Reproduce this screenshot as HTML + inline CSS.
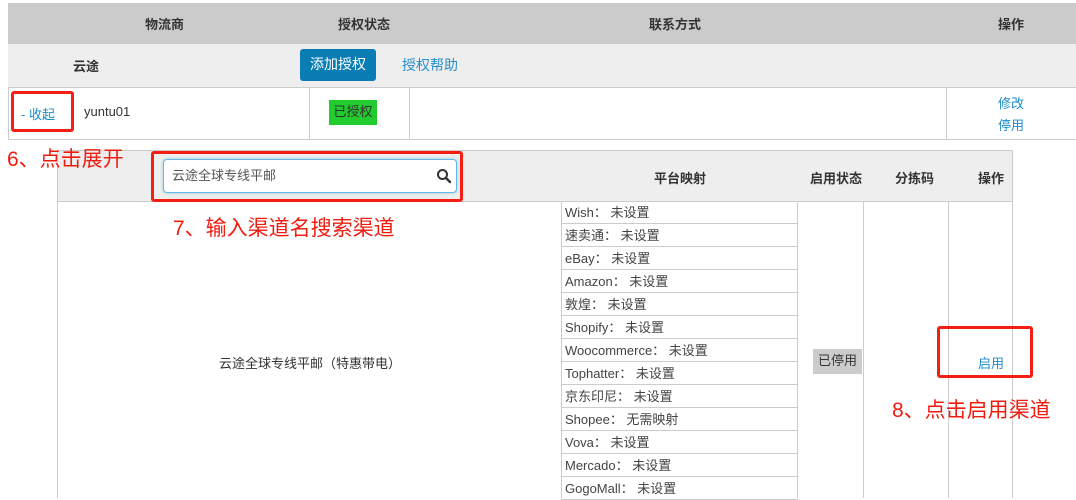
<!DOCTYPE html>
<html><head><meta charset="utf-8"><style>
*{box-sizing:border-box;margin:0;padding:0}
body{width:1076px;height:498px;overflow:hidden;background:#fff;font-family:"Liberation Sans","Noto Sans CJK SC",sans-serif;font-size:13px;color:#333;position:relative}
.a{position:absolute}
.c{text-align:center}
.b{font-weight:bold}
.blue{color:#1a8ccc}
.red{color:#f01c10;font-size:21px;z-index:5}
.rb{position:absolute;border:3px solid #f41e14;border-radius:3px;z-index:5}
.row{position:absolute;left:561px;width:237px;height:23px;border-bottom:1px solid #ccc;padding-left:4px;line-height:23px;color:#444}
</style></head><body>
<!-- top table -->
<div class="a" style="left:8px;top:3px;width:1068px;height:41px;background:#cbcbcb"></div>
<div class="a b" style="left:145px;top:14px">物流商</div>
<div class="a b" style="left:338px;top:14px">授权状态</div>
<div class="a b" style="left:649px;top:14px">联系方式</div>
<div class="a b" style="left:998px;top:14px">操作</div>
<div class="a" style="left:8px;top:44px;width:1068px;height:44px;background:#eee;border-bottom:1px solid #ccc"></div>
<div class="a b" style="left:73px;top:56px">云途</div>
<div class="a c" style="left:300px;top:49px;width:76px;height:32px;background:#0a7db4;border-radius:3px;color:#fff;line-height:31px;font-size:14px">添加授权</div>
<div class="a blue" style="left:402px;top:55px;font-size:14px;color:#2a8fcb">授权帮助</div>
<div class="a" style="left:8px;top:88px;width:1068px;height:52px;border-left:1px solid #ccc;border-bottom:1px solid #ccc"></div>
<div class="a" style="left:309px;top:88px;width:1px;height:51px;background:#ccc"></div>
<div class="a" style="left:409px;top:88px;width:1px;height:51px;background:#ccc"></div>
<div class="a" style="left:946px;top:88px;width:1px;height:51px;background:#ccc"></div>
<div class="a blue" style="left:21px;top:104px">- 收起</div>
<div class="a" style="left:84px;top:104px">yuntu01</div>
<div class="a c" style="left:329px;top:100px;width:48px;height:25px;background:#22cc2e;line-height:24px">已授权</div>
<div class="a blue" style="left:998px;top:93px">修改</div>
<div class="a blue" style="left:998px;top:115px">停用</div>
<div class="rb" style="left:11px;top:91px;width:63px;height:41px"></div>

<!-- inner table -->
<div class="a" style="left:57px;top:150px;width:956px;height:52px;background:#eee;border:1px solid #ccc;border-bottom:1px solid #ccc"></div>
<div class="a" style="left:57px;top:201px;width:956px;height:297px;border-left:1px solid #ccc;border-right:1px solid #ccc"></div>
<div class="a red" style="left:7px;top:143px">6、点击展开</div>
<div class="a" style="left:163px;top:159px;width:294px;height:34px;border:1px solid #66b8e8;border-radius:4px;background:#fff;box-shadow:0 0 3px #9cd;padding-left:8px;line-height:32px;color:#555">云途全球专线平邮</div>
<svg class="a" style="left:436px;top:168px" width="16" height="16" viewBox="0 0 16 16"><circle cx="6.5" cy="6.5" r="4.5" stroke="#333" stroke-width="2" fill="none"/><path d="M10 10l4 4" stroke="#333" stroke-width="2.4" stroke-linecap="round"/></svg>
<div class="rb" style="left:151px;top:151px;width:312px;height:51px"></div>
<div class="a b" style="left:654px;top:168px">平台映射</div>
<div class="a b" style="left:810px;top:168px">启用状态</div>
<div class="a b" style="left:895px;top:168px">分拣码</div>
<div class="a b" style="left:978px;top:168px">操作</div>
<div class="a" style="left:561px;top:201px;width:1px;height:297px;background:#ccc"></div>
<div class="a" style="left:797px;top:201px;width:1px;height:297px;background:#ccc"></div>
<div class="a" style="left:863px;top:201px;width:1px;height:297px;background:#ccc"></div>
<div class="a" style="left:948px;top:201px;width:1px;height:297px;background:#ccc"></div>
<div class="row" style="top:201px">Wish：&nbsp;未设置</div>
<div class="row" style="top:224px">速卖通：&nbsp;未设置</div>
<div class="row" style="top:247px">eBay：&nbsp;未设置</div>
<div class="row" style="top:270px">Amazon：&nbsp;未设置</div>
<div class="row" style="top:293px">敦煌：&nbsp;未设置</div>
<div class="row" style="top:316px">Shopify：&nbsp;未设置</div>
<div class="row" style="top:339px">Woocommerce：&nbsp;未设置</div>
<div class="row" style="top:362px">Tophatter：&nbsp;未设置</div>
<div class="row" style="top:385px">京东印尼：&nbsp;未设置</div>
<div class="row" style="top:408px">Shopee：&nbsp;无需映射</div>
<div class="row" style="top:431px">Vova：&nbsp;未设置</div>
<div class="row" style="top:454px">Mercado：&nbsp;未设置</div>
<div class="row" style="top:477px">GogoMall：&nbsp;未设置</div>
<div class="a red" style="left:173px;top:212px">7、输入渠道名搜索渠道</div>
<div class="a" style="left:219px;top:353px">云途全球专线平邮（特惠带电）</div>
<div class="a c" style="left:813px;top:349px;width:49px;height:25px;background:#ccc;line-height:24px">已停用</div>
<div class="a blue" style="left:978px;top:353px">启用</div>
<div class="rb" style="left:937px;top:326px;width:96px;height:52px"></div>
<div class="a red" style="left:892px;top:394px">8、点击启用渠道</div>
</body></html>
